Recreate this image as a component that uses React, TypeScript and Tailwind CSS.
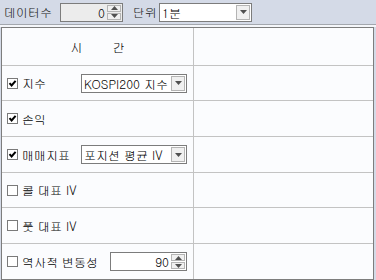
import React from "react";

function Tri({ dir = "down" }: { dir?: "down" | "up" }) {
  return (
    <svg width="7" height="4" viewBox="0 0 7 4">
      <path d={dir === "down" ? "M0 0H7L3.5 4Z" : "M0 4H7L3.5 0Z"} fill="#505050" />
    </svg>
  );
}

function Combo({ text, className }: { text: string; className: string }) {
  return (
    <div className={"flex h-[19px] border border-[#7c7c7c] bg-white " + className}>
      <div className="flex-1 pl-[2px] leading-[17px] whitespace-nowrap overflow-hidden">{text}</div>
      <div className="w-[14px] my-[1px] mr-[1px] border border-[#b4b4b4] bg-[#f0f0f0] flex items-center justify-center">
        <Tri />
      </div>
    </div>
  );
}

function Spin({ value, className, bg }: { value: string; className: string; bg: string }) {
  return (
    <div className={"flex h-[19px] border border-[#7c7c7c] " + bg + " " + className}>
      <div className="flex-1 text-right pr-[2px] leading-[17px]">{value}</div>
      <div className="w-[14px] flex flex-col my-[1px] mr-[1px] gap-[1px]">
        <div className="flex-1 border border-[#b4b4b4] bg-[#f0f0f0] flex items-center justify-center">
          <Tri dir="up" />
        </div>
        <div className="flex-1 border border-[#b4b4b4] bg-[#f0f0f0] flex items-center justify-center">
          <Tri />
        </div>
      </div>
    </div>
  );
}

function Check({ checked }: { checked: boolean }) {
  return (
    <div className="w-[11px] h-[11px] border border-[#7a7a7a] bg-white flex items-center justify-center shrink-0">
      {checked && (
        <svg width="9" height="9" viewBox="0 0 9 9">
          <path d="M1.5 4.2L3.6 6.5L7.6 1.8" stroke="#000" strokeWidth="2" fill="none" />
        </svg>
      )}
    </div>
  );
}

function Row({
  h,
  last,
  children,
}: {
  h: string;
  last?: boolean;
  children?: React.ReactNode;
}) {
  return (
    <div className={"flex " + h + (last ? "" : " border-b border-[#c3c3c3]")}>
      <div className="w-[192px] border-r border-[#c3c3c3] flex items-center pl-[5px] pr-[6px]">{children}</div>
      <div className="flex-1" />
    </div>
  );
}

export default function App() {
  const font = "font-['Gulim','Noto_Sans_CJK_KR','Noto_Sans',sans-serif]";
  return (
    <div className={"w-[376px] h-[280px] bg-[#d4dae7] text-[12px] text-black overflow-hidden " + font}>
      <div className="h-[24px] flex items-center pl-[4px]">
        <div className="w-[56px] text-[#1a1a1a]">데이터수</div>
        <Spin value="0" className="w-[63px]" bg="bg-[#ececec]" />
        <div className="w-[26px] ml-[10px] text-[#1a1a1a]">단위</div>
        <Combo text="1분" className="w-[93px]" />
      </div>
      <div className="h-[1px] bg-[#a3a7ae]" />
      <div className="h-[2px] bg-[#f4f6fa]" />
      <div className="ml-[1px] w-[373px] h-[253px] border border-[#7d7d7d] bg-[#fbfcfe] flex flex-col">
        <div className="flex h-[38px] border-b border-[#c3c3c3]">
          <div className="w-[192px] border-r border-[#c3c3c3] flex items-center justify-center">
            <span className="mr-[30px]">시</span>
            <span>간</span>
          </div>
          <div className="flex-1" />
        </div>
        <Row h="h-[35px]">
          <Check checked />
          <span className="ml-[4px]">지수</span>
          <Combo text="KOSPI200 지수" className="ml-auto w-[106px]" />
        </Row>
        <Row h="h-[36px]">
          <Check checked />
          <span className="ml-[4px]">손익</span>
        </Row>
        <Row h="h-[36px]">
          <Check checked />
          <span className="ml-[4px]">매매지표</span>
          <Combo text="포지션 평균 IV" className="ml-auto w-[106px]" />
        </Row>
        <Row h="h-[35px]">
          <Check checked={false} />
          <span className="ml-[4px]">콜 대표 IV</span>
        </Row>
        <Row h="h-[36px]">
          <Check checked={false} />
          <span className="ml-[4px]">풋 대표 IV</span>
        </Row>
        <Row h="flex-1" last>
          <Check checked={false} />
          <span className="ml-[4px]">역사적 변동성</span>
          <Spin value="90" className="ml-auto w-[77px]" bg="bg-white" />
        </Row>
      </div>
    </div>
  );
}
